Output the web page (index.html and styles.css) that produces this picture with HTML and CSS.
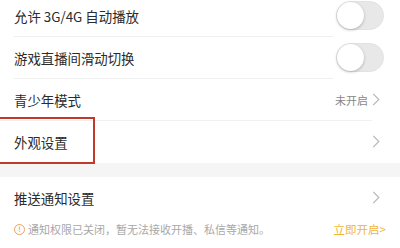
FILE: index.html
```html
<!DOCTYPE html>
<html lang="zh-CN">
<head>
    <meta charset="UTF-8">
    <meta name="viewport" content="width=device-width, initial-scale=1.0">
    <title>设置</title>
    <link rel="stylesheet" href="styles.css">
</head>
<body>
    <div class="group first">
        <div class="row">
            <span class="label">允许 3G/4G 自动播放</span>
            <span class="switch"><span class="knob"></span></span>
        </div>
        <div class="row">
            <span class="label">游戏直播间滑动切换</span>
            <span class="switch"><span class="knob"></span></span>
        </div>
        <div class="row wide">
            <span class="label">青少年模式</span>
            <span class="value">未开启<svg class="chevron" viewBox="0 0 8 14"><polyline points="1,1 7,7 1,13"/></svg></span>
        </div>
        <div class="row last">
            <span class="label">外观设置</span>
            <svg class="chevron" viewBox="0 0 8 14"><polyline points="1,1 7,7 1,13"/></svg>
            <div class="mark"></div>
        </div>
    </div>
    <div class="gap"></div>
    <div class="group">
        <div class="row last">
            <span class="label">推送通知设置</span>
            <svg class="chevron" viewBox="0 0 8 14"><polyline points="1,1 7,7 1,13"/></svg>
        </div>
        <div class="notice">
            <span class="tip"><span class="info">!</span>通知权限已关闭，暂无法接收开播、私信等通知。</span>
            <span class="open">立即开启&gt;</span>
        </div>
    </div>
</body>
</html>
```

FILE: styles.css
```css
body {
    margin: 0;
    background: #fff;
    color: #333;
    font-family: "Noto Sans CJK SC", "Noto Sans", sans-serif;
    overflow: hidden;
}
.group {
    position: relative;
}
.group.first {
    margin-top: -5px;
}
.row {
    position: relative;
    display: flex;
    align-items: center;
    justify-content: space-between;
    height: 41px;
    padding: 0 20px 0 14px;
    border-bottom: 1px solid transparent;
}
/* divider line, shorter than the row */
.row::after {
    content: "";
    position: absolute;
    left: 14px;
    right: 67px;
    bottom: -1px;
    height: 1px;
    background: #f0f0f0;
}
.row.wide::after {
    left: 0;
    right: 28px;
}
.row.last::after {
    content: none;
}
.label {
    font-size: 13.4px;
    color: #2b2b2b;
}
.switch {
    position: relative;
    width: 48px;
    height: 29px;
    margin-right: -4px;
    border-radius: 15px;
    background: #e8e8e8;
    box-sizing: border-box;
    border: 1px solid #e2e2e2;
}
.knob {
    position: absolute;
    top: 0;
    left: 0;
    width: 27px;
    height: 27px;
    border-radius: 50%;
    background: #fff;
    box-shadow: 0 1px 3px rgba(0, 0, 0, 0.25);
}
.value {
    display: flex;
    align-items: center;
    gap: 4px;
    font-size: 11px;
    color: #888;
}
.chevron {
    width: 8px;
    height: 13px;
    fill: none;
    stroke: #b8b8b8;
    stroke-width: 1.3;
}
.mark {
    position: absolute;
    left: -3px;
    top: -4px;
    width: 94px;
    height: 43px;
    border: 2px solid #c0392b;
}
.gap {
    height: 14px;
    background: #f5f5f5;
}
.notice {
    display: flex;
    align-items: center;
    justify-content: space-between;
    padding: 0 14px;
    height: 20px;
    font-size: 11px;
}
.tip {
    display: flex;
    align-items: center;
    color: #a8a8a8;
}
.info {
    display: inline-flex;
    align-items: center;
    justify-content: center;
    width: 9px;
    height: 9px;
    margin-right: 3px;
    border: 1px solid #f0a05a;
    border-radius: 50%;
    color: #f0a05a;
    font-size: 7px;
    font-weight: bold;
    line-height: 1;
}
.open {
    color: #f2b53a;
    font-size: 11.5px;
}
```
